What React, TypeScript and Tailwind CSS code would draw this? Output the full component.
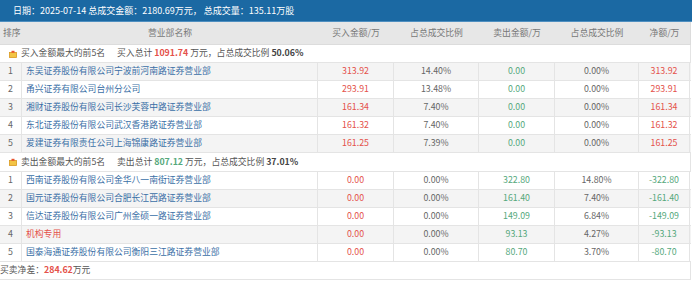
import React from "react";

const font = { fontFamily: '"Noto Sans CJK SC", "Noto Sans", sans-serif' };

type Row = {
  rank: number;
  name: string;
  buy: string;
  buyPct: string;
  sell: string;
  sellPct: string;
  net: string;
  org?: boolean;
};

const buyRows: Row[] = [
  { rank: 1, name: "东吴证券股份有限公司宁波前河南路证券营业部", buy: "313.92", buyPct: "14.40%", sell: "0.00", sellPct: "0.00%", net: "313.92" },
  { rank: 2, name: "甬兴证券有限公司台州分公司", buy: "293.91", buyPct: "13.48%", sell: "0.00", sellPct: "0.00%", net: "293.91" },
  { rank: 3, name: "湘财证券股份有限公司长沙芙蓉中路证券营业部", buy: "161.34", buyPct: "7.40%", sell: "0.00", sellPct: "0.00%", net: "161.34" },
  { rank: 4, name: "东北证券股份有限公司武汉香港路证券营业部", buy: "161.32", buyPct: "7.40%", sell: "0.00", sellPct: "0.00%", net: "161.32" },
  { rank: 5, name: "爱建证券有限责任公司上海锦康路证券营业部", buy: "161.25", buyPct: "7.39%", sell: "0.00", sellPct: "0.00%", net: "161.25" },
];

const sellRows: Row[] = [
  { rank: 1, name: "西南证券股份有限公司金华八一南街证券营业部", buy: "0.00", buyPct: "0.00%", sell: "322.80", sellPct: "14.80%", net: "-322.80" },
  { rank: 2, name: "国元证券股份有限公司合肥长江西路证券营业部", buy: "0.00", buyPct: "0.00%", sell: "161.40", sellPct: "7.40%", net: "-161.40" },
  { rank: 3, name: "信达证券股份有限公司广州金硕一路证券营业部", buy: "0.00", buyPct: "0.00%", sell: "149.09", sellPct: "6.84%", net: "-149.09" },
  { rank: 4, name: "机构专用", buy: "0.00", buyPct: "0.00%", sell: "93.13", sellPct: "4.27%", net: "-93.13", org: true },
  { rank: 5, name: "国泰海通证券股份有限公司衡阳三江路证券营业部", buy: "0.00", buyPct: "0.00%", sell: "80.70", sellPct: "3.70%", net: "-80.70" },
];

const RED = "text-[#e4514a]";
const GREEN = "text-[#55a87c]";

function Icon() {
  return (
    <svg width="8" height="8" viewBox="0 0 8 8" className="shrink-0">
      <rect x="0.5" y="2.5" width="7" height="5" fill="#f3c445" stroke="#d99a1e" strokeWidth="0.8" />
      <rect x="2.5" y="0.8" width="3" height="2" fill="#e8552f" />
    </svg>
  );
}

function DataRow({ r, gray }: { r: Row; gray: boolean }) {
  const netNeg = r.net.startsWith("-");
  return (
    <div className={`flex h-[18px] border-b border-[#e4e4e4] ${gray ? "bg-[#f4f4f4]" : "bg-white"}`}>
      <div className="w-[22px] shrink-0 border-r border-[#e4e4e4] flex items-center justify-center text-[#666]">{r.rank}</div>
      <div className={`w-[296px] shrink-0 border-r border-[#e4e4e4] flex items-center pl-[4px] ${r.org ? "text-[#e4514a]" : "text-[#3a6fa6]"}`}>{r.name}</div>
      <div className={`w-[76px] shrink-0 border-r border-[#e4e4e4] flex items-center justify-center ${RED}`}>{r.buy}</div>
      <div className="w-[85px] shrink-0 border-r border-[#e4e4e4] flex items-center justify-center text-[#666]">{r.buyPct}</div>
      <div className={`w-[76px] shrink-0 border-r border-[#e4e4e4] flex items-center justify-center ${GREEN}`}>{r.sell}</div>
      <div className="w-[84px] shrink-0 border-r border-[#e4e4e4] flex items-center justify-center text-[#666]">{r.sellPct}</div>
      <div className={`w-[51px] shrink-0 border-r border-[#e4e4e4] flex items-center justify-center ${netNeg ? GREEN : RED}`}>{r.net}</div>
    </div>
  );
}

export default function App() {
  return (
    <div className="w-[692px] h-[281px] bg-white overflow-hidden text-[8.8px] leading-none" style={font}>
      <div className="h-[22px] bg-[#1b69a3] text-white text-[9px] flex items-center pl-[13px] border-b border-[#4f8fc0]">
        日期：2025-07-14 总成交金额：2180.69万元， 总成交量：135.11万股
      </div>
      <div className="w-[691px]">
        <div className="flex h-[23px] bg-[#e7e7e7] border-b border-[#dcdcdc] border-r text-[#777]">
          <div className="w-[22px] shrink-0 flex items-center pl-[3px]">排序</div>
          <div className="w-[296px] shrink-0 flex items-center justify-center">营业部名称</div>
          <div className="w-[76px] shrink-0 flex items-center justify-center">买入金额/万</div>
          <div className="w-[85px] shrink-0 flex items-center justify-center">占总成交比例</div>
          <div className="w-[76px] shrink-0 flex items-center justify-center">卖出金额/万</div>
          <div className="w-[84px] shrink-0 flex items-center justify-center">占总成交比例</div>
          <div className="w-[51px] shrink-0 flex items-center justify-center">净额/万</div>
        </div>
        <div className="flex items-center h-[18px] border-b border-r border-[#e4e4e4] pl-[9px] gap-[4px] text-[#555]">
          <Icon />
          <span>买入金额最大的前5名</span>
          <span className="ml-[8px]">买入总计 <b className="text-[#e4514a]">1091.74</b> 万元，占总成交比例 <b className="text-[#444]">50.06%</b></span>
        </div>
        {buyRows.map((r, i) => (
          <DataRow key={r.rank} r={r} gray={i % 2 === 0} />
        ))}
        <div className="flex items-center h-[19px] border-b border-r border-[#e4e4e4] pl-[9px] gap-[4px] text-[#555]">
          <Icon />
          <span>卖出金额最大的前5名</span>
          <span className="ml-[8px]">卖出总计 <b className="text-[#55a87c]">807.12</b> 万元，占总成交比例 <b className="text-[#444]">37.01%</b></span>
        </div>
        {sellRows.map((r, i) => (
          <DataRow key={r.rank} r={r} gray={i % 2 === 1} />
        ))}
        <div className="flex items-center h-[18px] border-b border-r border-[#e4e4e4] text-[#555]">
          <span>买卖净差：<b className="text-[#e4514a]">284.62</b>万元</span>
        </div>
      </div>
    </div>
  );
}
